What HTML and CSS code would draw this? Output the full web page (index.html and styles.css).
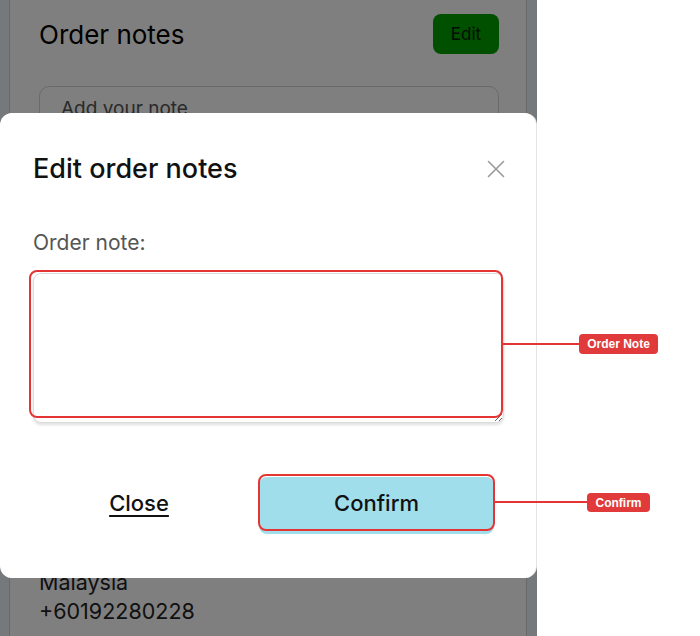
FILE: index.html
```html
<!DOCTYPE html>
<html lang="en">
<head>
<meta charset="utf-8">
<title>Edit order notes</title>
<link rel="stylesheet" href="styles.css">
</head>
<body>
<div class="stage">
  <div class="app">
    <div class="page-card">
      <div class="card-head">
        <span class="card-title">Order notes</span>
        <span class="edit-btn">Edit</span>
      </div>
      <div class="note-input">Add your note</div>
      <div class="address">
        <div>Malaysia</div>
        <div>+60192280228</div>
      </div>
    </div>
    <div class="scrim"></div>
    <div class="modal">
      <div class="modal-head">
        <h2 class="modal-title">Edit order notes</h2>
        <svg class="close-x" width="18" height="18" viewBox="0 0 18 18" aria-label="Close">
          <path d="M1.5 1.5 L16.5 16.5 M16.5 1.5 L1.5 16.5" stroke="#9a9a9a" stroke-width="1.6" fill="none" stroke-linecap="round"/>
        </svg>
      </div>
      <label class="field-label" for="note">Order note:</label>
      <textarea id="note" class="note-area"></textarea>
      <div class="modal-foot">
        <span class="close-link">Close</span>
        <span class="confirm-btn">Confirm</span>
      </div>
    </div>
  </div>
  <div class="annotations">
    <div class="ann-box ann-box-note"></div>
    <div class="ann-line ann-line-note"></div>
    <div class="ann-tag ann-tag-note">Order Note</div>
    <div class="ann-box ann-box-confirm"></div>
    <div class="ann-line ann-line-confirm"></div>
    <div class="ann-tag ann-tag-confirm">Confirm</div>
  </div>
</div>
</body>
</html>
```
FILE: styles.css
```css
html, body {
  margin: 0;
  padding: 0;
  background: #ffffff;
}

body {
  font-family: Inter, "Noto Sans", "Liberation Sans", sans-serif;
  color: #111;
}

.stage {
  position: relative;
  width: 700px;
  height: 636px;
  overflow: hidden;
}

.app {
  position: relative;
  width: 537px;
  height: 636px;
  background: #eaf2f8;
  overflow: hidden;
}

.page-card {
  box-sizing: border-box;
  margin-left: 9px;
  width: 518px;
  height: 100%;
  background: #ffffff;
  border-left: 1px solid #cfd3d6;
  border-right: 1px solid #cfd3d6;
  padding: 14px 27px 0 29px;
}

.card-head {
  display: flex;
  justify-content: space-between;
  align-items: center;
  height: 40px;
}

.card-title {
  font-size: 26px;
  color: #000;
}

.edit-btn {
  display: flex;
  align-items: center;
  justify-content: center;
  width: 66px;
  height: 40px;
  border-radius: 8px;
  background: #00a000;
  color: #081808;
  font-size: 17px;
}

.note-input {
  box-sizing: border-box;
  margin-top: 32px;
  height: 52px;
  border: 1px solid #d4d4d4;
  border-radius: 10px;
  padding: 10px 21px;
  font-size: 19px;
  color: #555;
}

.address {
  margin-top: 430px;
  font-size: 21.5px;
  line-height: 29px;
  color: #222;
}

.scrim {
  position: absolute;
  inset: 0;
  background: rgba(0, 0, 0, 0.5);
}

.modal {
  position: absolute;
  top: 113px;
  left: 0;
  box-sizing: border-box;
  width: 536px;
  height: 465px;
  padding: 40px 33px 0 33px;
  background: #ffffff;
  border-radius: 12px;
  box-shadow: 1px 0 0 #e4e4e4;
  display: flex;
  flex-direction: column;
}

.modal-head {
  display: flex;
  justify-content: space-between;
  align-items: center;
  height: 32px;
}

.modal-title {
  margin: 0;
  font-size: 27px;
  font-weight: 500;
  line-height: 32px;
  color: #111;
}

.close-x {
  margin-right: -2px;
}

.field-label {
  margin-top: 46px;
  font-size: 21px;
  line-height: 24px;
  color: #555;
}

.note-area {
  box-sizing: border-box;
  margin-top: 18px;
  width: 471px;
  height: 150px;
  border: 1px solid #dcdcdc;
  border-radius: 8px;
  box-shadow: 0 2px 3px rgba(0, 0, 0, 0.12);
  background: #fff;
  resize: vertical;
  font-family: inherit;
  font-size: 18px;
  outline: none;
}

.modal-foot {
  display: flex;
  align-items: center;
  gap: 14px;
  margin-top: 54px;
}

.close-link {
  width: 212px;
  margin-bottom: 5px;
  text-align: center;
  font-size: 22px;
  font-weight: 500;
  text-decoration: underline;
  text-underline-offset: 4px;
  text-decoration-thickness: 2px;
  color: #111;
}

.confirm-btn {
  box-sizing: border-box;
  display: flex;
  align-items: center;
  justify-content: center;
  width: 235px;
  height: 57px;
  padding-bottom: 5px;
  border-radius: 8px;
  background: #a1deec;
  font-size: 22px;
  font-weight: 500;
  color: #111;
}

.annotations {
  position: absolute;
  inset: 0;
  pointer-events: none;
}

.ann-box {
  position: absolute;
  box-sizing: border-box;
  border: 2.5px solid #e53434;
  border-radius: 8px;
}

.ann-box-note {
  left: 29px;
  top: 270px;
  width: 474px;
  height: 148px;
}

.ann-box-confirm {
  left: 258px;
  top: 474px;
  width: 237px;
  height: 57px;
}

.ann-line {
  position: absolute;
  height: 2px;
  background: #e53434;
}

.ann-line-note {
  left: 501px;
  top: 343px;
  width: 79px;
}

.ann-line-confirm {
  left: 493px;
  top: 501px;
  width: 95px;
}

.ann-tag {
  position: absolute;
  box-sizing: border-box;
  display: flex;
  align-items: center;
  justify-content: center;
  background: #e03a3a;
  color: #ffffff;
  border-radius: 4px;
  font-family: "Liberation Sans", Arial, sans-serif;
  font-weight: bold;
  font-size: 12px;
}

.ann-tag-note {
  left: 579px;
  top: 334px;
  width: 79px;
  height: 20px;
}

.ann-tag-confirm {
  left: 587px;
  top: 493px;
  width: 63px;
  height: 19px;
}
```
